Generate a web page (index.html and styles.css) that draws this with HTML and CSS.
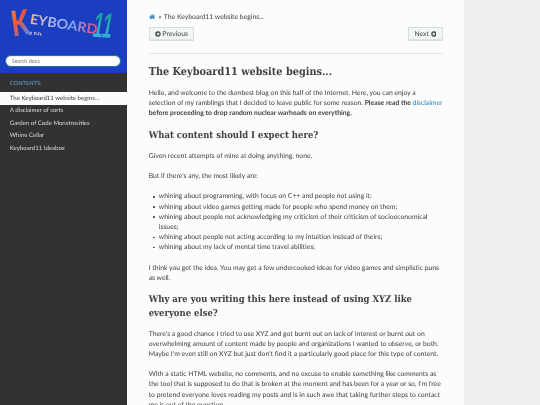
FILE: index.html
```html
<!DOCTYPE html>
<html lang="en">
<head>
<meta charset="utf-8">
<title>The Keyboard11 website begins...</title>
<link rel="stylesheet" href="styles.css">
</head>
<body>
<div class="page">
  <nav class="side">
    <div class="search-area">
      <svg class="logo" viewBox="0 0 115.600 49.800" aria-label="Keyboard11 logo">
        <defs>
          <linearGradient id="gk" x1="0" y1="0" x2="0.5" y2="1">
            <stop offset="0" stop-color="#eca048"/><stop offset="0.5" stop-color="#f4552f"/><stop offset="1" stop-color="#4f86f0"/>
          </linearGradient>
          <linearGradient id="gw" x1="0" y1="0" x2="1" y2="0">
            <stop offset="0" stop-color="#e8b890"/><stop offset="0.3" stop-color="#b0b8f0"/><stop offset="0.65" stop-color="#80a0f0"/><stop offset="1" stop-color="#f04a68"/>
          </linearGradient>
          <linearGradient id="gn" x1="0" y1="0" x2="0" y2="1">
            <stop offset="0" stop-color="#0c9c88"/><stop offset="1" stop-color="#40b8f0"/>
          </linearGradient>
        </defs>
        <text class="logo-k" x="8" y="31.500" textLength="18" lengthAdjust="spacingAndGlyphs" fill="url(#gk)" transform="rotate(-8 8 31.500)">K</text>
        <text class="logo-w" x="24.500" y="18.500" textLength="68" lengthAdjust="spacingAndGlyphs" fill="url(#gw)" transform="rotate(9 24.500 18.500)">EYBOARD</text>
        <text class="logo-n" x="91" y="32" textLength="19" lengthAdjust="spacingAndGlyphs" fill="url(#gn)" transform="rotate(3 91 32) skewX(-8)">11</text>
        <text class="logo-s" x="24.600" y="29.500" transform="rotate(5 24.600 29.500)">z n.n.</text>
      </svg>
      <input class="search-box" type="text" placeholder="Search docs">
    </div>
    <p class="caption">Contents:</p>
    <ul class="toc">
      <li class="current"><a>The Keyboard11 website begins...</a></li>
      <li><a>A disclaimer of sorts</a></li>
      <li><a>Garden of Code Monstrosities</a></li>
      <li><a>Whine Cellar</a></li>
      <li><a>Keyboard11 Ideabox</a></li>
    </ul>
  </nav>
  <main class="content">
    <div class="crumbs">
      <svg class="home" viewBox="0 0 12 10"><path d="M6 .5.3 5.300l.7.8L6 1.900l5 4.200.7-.8L9.800 3.700V1H8.300v1.500zM1.900 6v3.700h3V7h2.200v2.700h3V6L6 2.700z"/></svg>
      <span class="sep">»</span><span>The Keyboard11 website begins...</span>
    </div>
    <div class="pager">
      <a class="btn"><svg class="ci" viewBox="0 0 10 10"><path fill-rule="evenodd" d="M5 .4a4.600 4.600 0 1 0 0 9.200A4.600 4.600 0 0 0 5 .4zM5.400 2 6.500 3.100 5.200 4.200H8v1.600H5.200L6.500 6.900 5.400 8 2.400 5z"/></svg>Previous</a>
      <a class="btn">Next<svg class="ci" viewBox="0 0 10 10"><path fill-rule="evenodd" d="M5 .4a4.600 4.600 0 1 0 0 9.200A4.600 4.600 0 0 0 5 .4zM4.600 2 3.500 3.100 4.800 4.200H2v1.600h2.800L3.500 6.900 4.600 8l3-3z"/></svg></a>
    </div>
    <hr class="rule">
    <h1>The Keyboard11 website begins...</h1>
    <p>Hello, and welcome to the dumbest blog on this half of the Internet. Here, you can enjoy a selection of my ramblings that I decided to leave public for some reason. <strong>Please read the <a class="link">disclaimer</a> before proceeding to drop random nuclear warheads on everything.</strong></p>
    <h2>What content should I expect here?</h2>
    <p>Given recent attempts of mine at doing anything, none.</p>
    <p>But if there's any, the most likely are:</p>
    <ul class="list">
      <li>whining about programming, with focus on C++ and people not using it;</li>
      <li>whining about video games getting made for people who spend money on them;</li>
      <li>whining about people not acknowledging my criticism of their criticism of socioeconomical issues;</li>
      <li>whining about people not acting according to my intuition instead of theirs;</li>
      <li>whining about my lack of mental time travel abilities;</li>
    </ul>
    <p>I think you get the idea. You may get a few undercooked ideas for video games and simplistic puns as well.</p>
    <h2>Why are you writing this here instead of using XYZ like everyone else?</h2>
    <p>There's a good chance I tried to use XYZ and got burnt out on lack of interest or burnt out on overwhelming amount of content made by people and organizations I wanted to observe, or both. Maybe I'm even still on XYZ but just don't find it a particularly good place for this type of content.</p>
    <p>With a static HTML website, no comments, and no excuse to enable something like comments as the tool that is supposed to do that is broken at the moment and has been for a year or so, I'm free to pretend everyone loves reading my posts and is in such awe that taking further steps to contact me is out of the question.</p>
  </main>
</div>
</body>
</html>
```
FILE: styles.css
```css
html, body { margin: 0; height: 100%; overflow: hidden; background: #efefef; }
.page { display: flex; width: 1280px; height: 960px; overflow: hidden; zoom: .421875; filter: blur(.6px); background: #efefef; font-family: Lato, "Liberation Sans", sans-serif; font-size: 16.150px; line-height: 24.100px; color: #404040; text-rendering: geometricPrecision; }
.side { width: 300px; flex: none; background: #343131; }
.search-area { box-sizing: border-box; height: 173px; padding: 12.900px; background: #1b3dbf; }
.logo { display: block; width: 274px; height: 118px; }
.logo-k { font: 900 35px Lato, sans-serif; }
.logo-w { font: 700 13.500px Lato, sans-serif; }
.logo-n { font: 700 35px "Liberation Sans", sans-serif; }
.logo-s { font: 700 5.500px Lato, sans-serif; fill: #f3dccb; }
.search-box { display: block; width: 100%; height: 28px; margin: 0; box-sizing: border-box; padding: 0 12px; border: 1px solid #2472a4; border-radius: 50px; background: #fff; font: 12.800px Lato, sans-serif; color: #404040; box-shadow: inset 0 1px 3px #ddd; }
.search-box::placeholder { color: #777; opacity: 1; }
.caption { height: 36px; line-height: 32px; margin: 10px 0 0; padding: 0 23.300px; color: #55a5d9; font-size: 13.600px; text-transform: uppercase; }
.toc { list-style: none; margin: 0; padding: 0; font-size: 14.400px; line-height: 18px; }
.toc a { display: block; padding: 5.830px 23.300px; color: #d9d9d9; }
.toc .current a { background: #fcfcfc; color: #404040; }
.content { width: 800px; flex: none; box-sizing: border-box; background: #fcfcfc; padding: 28.300px 49px 0 52.500px; overflow: hidden; }
.crumbs { display: flex; align-items: center; height: 24px; }
.home { width: 15px; height: 12.500px; fill: #2980b9; margin-right: 8px; }
.sep { margin-right: 6px; }
.pager { display: flex; justify-content: space-between; margin: 12px 2px 0 0; }
.btn { display: flex; align-items: center; gap: 4px; box-sizing: border-box; height: 34px; padding: 0 12px; background: #f3f6f6; border: 1px solid rgba(0,0,0,.1); box-shadow: inset 0 -2px 0 rgba(0,0,0,.1); border-radius: 2px; color: #404040; }
.ci { width: 14px; height: 14px; fill: #404040; }
.rule { border: 0; border-top: 1px solid #e1e4e5; margin: 27px 2px 25.700px 0; height: 0; }
h1, h2 { font-family: "DejaVu Serif Condensed", "DejaVu Serif", serif; font-weight: 700; color: #404040; margin: 0; }
h1 { font-size: 25.700px; line-height: 33px; margin-bottom: 22.300px; }
h2 { font-size: 22.400px; line-height: 32px; margin-bottom: 20.500px; }
p { margin: 0 0 24px; }
.link { color: #2980b9; font-weight: 400; }
.list { margin: 0 0 24px; padding: 0 0 0 24px; list-style: none; }
.list li { position: relative; }
.list li::before { content: ""; position: absolute; left: -14px; top: 10.500px; width: 4px; height: 4px; border-radius: 50%; background: #404040; }
```
